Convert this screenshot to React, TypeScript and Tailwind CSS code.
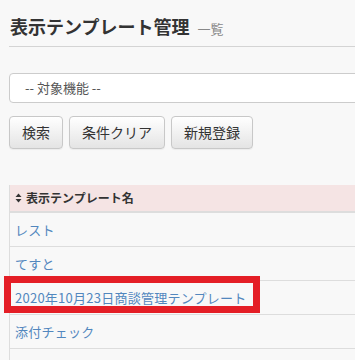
import React from "react";

const rows = [
  "レスト",
  "てすと",
  "2020年10月23日商談管理テンプレート",
  "添付チェック",
  "報告（項目タイプ別検証）",
];

const SortIcon = () => (
  <svg width="7" height="10" viewBox="0 0 7 10" className="mr-[4px] shrink-0">
    <path d="M3.5 0.5 L6.5 4 L0.5 4 Z" fill="#333" />
    <path d="M3.5 9.5 L6.5 6 L0.5 6 Z" fill="#333" />
  </svg>
);

const Button = ({ label }: { label: string }) => (
  <button className="h-[33px] px-[12px] rounded-[4px] border border-[#c8c8c8] bg-gradient-to-b from-white to-[#e4e4e4] text-[14px] text-[#333] shadow-[0_1px_1px_rgba(0,0,0,0.05)]">
    {label}
  </button>
);

export default function App() {
  return (
    <div
      className="w-[355px] h-[360px] overflow-hidden bg-[#f8f8f8]"
      style={{ fontFamily: '"Noto Sans CJK JP", "Noto Sans", sans-serif' }}
    >
      <div className="w-[440px] pl-[9px]">
        <div className="pt-[12px] pb-[6px] pl-[1px] border-b border-[#d4d4d4] flex items-baseline">
          <h1 className="text-[18px] font-bold text-[#333] leading-[28px]">
            表示テンプレート管理
          </h1>
          <span className="ml-[8px] text-[13px] text-[#888]">一覧</span>
        </div>

        <div className="mt-[26px] h-[30px] rounded-[4px] border border-[#ccc] bg-white flex items-center pl-[15px] text-[13px] text-[#555]">
          -- 対象機能 --
        </div>

        <div className="mt-[13px] flex gap-[6px]">
          <Button label="検索" />
          <Button label="条件クリア" />
          <Button label="新規登録" />
        </div>

        <div className="mt-[36px] border-l border-[#ddd]">
          <div className="h-[28px] bg-[#f5e4e4] border-b-2 border-[#ddd] flex items-center pl-[5px] text-[12px] font-bold text-[#333]">
            <SortIcon />
            表示テンプレート名
          </div>
          {rows.map((r, i) => (
            <div
              key={r}
              className="relative h-[34px] border-b border-[#ddd] flex items-center pl-[5px] text-[13px] tracking-[0.25px] text-[#5287be]"
            >
              {r}
              {i === 2 && (
                <div className="absolute left-[-6px] top-[-5px] w-[256px] h-[37px] border-[7px] border-[#e41e26]" />
              )}
            </div>
          ))}
        </div>
      </div>
    </div>
  );
}
